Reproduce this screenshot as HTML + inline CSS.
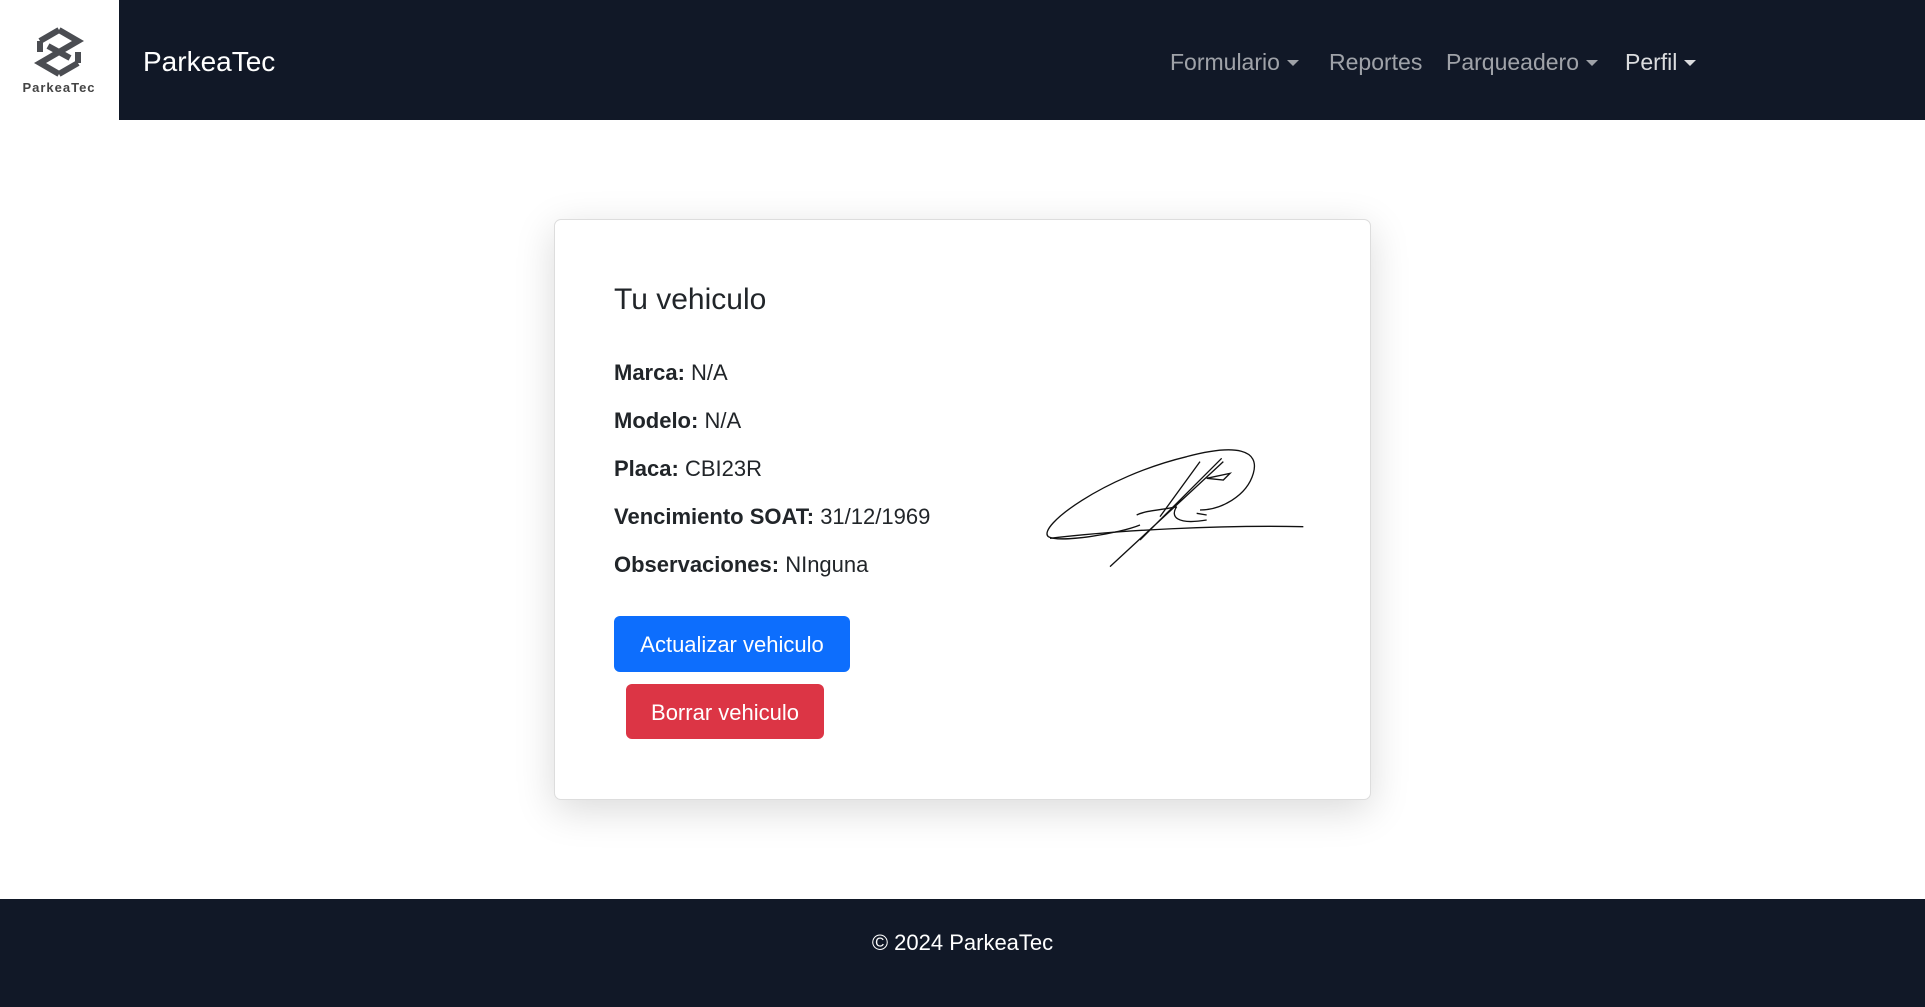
<!DOCTYPE html>
<html><head><meta charset="utf-8"><style>
*{margin:0;padding:0;box-sizing:border-box}
body{width:1925px;height:1007px;background:#fff;font-family:"Liberation Sans",sans-serif;color:#212529;position:relative;overflow:hidden}
.nav{position:absolute;left:0;top:0;width:1925px;height:120px;background:#111827}
.logo{position:absolute;left:0;top:0;width:119px;height:120px;background:#fff}
.brand{position:absolute;left:143px;top:46px;color:#fff;font-size:28px}
.ni{position:absolute;top:49px;font-size:23px;color:rgba(255,255,255,.6)}
.ni.c:after{content:"";display:inline-block;margin-left:7px;vertical-align:4px;border-top:6px solid currentColor;border-left:6px solid transparent;border-right:6px solid transparent}
.card{position:absolute;left:554px;top:219px;width:817px;height:581px;border:1px solid #ddd;border-radius:7px;background:#fff;box-shadow:0 10px 40px rgba(0,0,0,.15)}
h4{position:absolute;left:614px;top:283px;font-size:30px;font-weight:500}
.l{position:absolute;left:614px;font-size:22px}
.btn{position:absolute;color:#fff;font-size:22px;border-radius:6px;display:flex;align-items:center;justify-content:center;padding-top:2px}
.foot{position:absolute;left:0;top:899px;width:1925px;height:108px;background:#111827;color:#fff;font-size:22px;text-align:center;padding-top:31px}
</style></head><body>
<div class="nav">
<div class="logo">
<svg width="119" height="119" viewBox="0 0 119 119"><g fill="none" stroke="#4b4d52" stroke-width="6" stroke-linejoin="miter"><path d="M59 30 L78 41 L59 52 L48 46"/><path d="M59 74 L40 63 L59 52 L70 58"/><path d="M40 41 L59 30 M40 41 L40 52 M78 63 L78 52 M78 63 L59 74"/></g>
<text x="59" y="92" text-anchor="middle" font-family="Liberation Sans" font-weight="bold" font-size="13" fill="#444" letter-spacing="1">ParkeaTec</text></svg>
</div>
<div class="brand">ParkeaTec</div>
<div class="ni c" style="left:1170px">Formulario</div>
<div class="ni" style="left:1329px">Reportes</div>
<div class="ni c" style="left:1446px">Parqueadero</div>
<div class="ni c" style="left:1625px;color:rgba(255,255,255,.85)">Perfil</div>
</div>
<div class="card"></div>
<h4>Tu vehiculo</h4>
<div class="l" style="top:360px"><b>Marca:</b> N/A</div>
<div class="l" style="top:408px"><b>Modelo:</b> N/A</div>
<div class="l" style="top:456px"><b>Placa:</b> CBI23R</div>
<div class="l" style="top:504px"><b>Vencimiento SOAT:</b> 31/12/1969</div>
<div class="l" style="top:552px"><b>Observaciones:</b> NInguna</div>
<svg style="position:absolute;left:1020px;top:430px" width="320" height="150" viewBox="0 0 960 450" fill="none" stroke="#111" stroke-width="4">
<path d="M360 285 C300 310 120 340 85 320 C50 290 250 140 500 80 C650 40 720 60 700 130 C680 200 600 240 540 240"/>
<path d="M90 325 C300 300 600 285 850 290"/>
<path d="M540 95 L420 260 M605 85 L360 330 M610 95 L270 410"/>
<path d="M350 255 C380 240 430 240 470 230 M470 230 C450 260 470 285 560 270 M560 145 L630 130 L610 150 Z M530 250 L560 255"/>
</svg>
<div class="btn" style="left:614px;top:616px;width:236px;height:56px;background:#0d6efd">Actualizar vehiculo</div>
<div class="btn" style="left:626px;top:684px;width:198px;height:55px;background:#dc3545">Borrar vehiculo</div>
<div class="foot">© 2024 ParkeaTec</div>
</body></html>
